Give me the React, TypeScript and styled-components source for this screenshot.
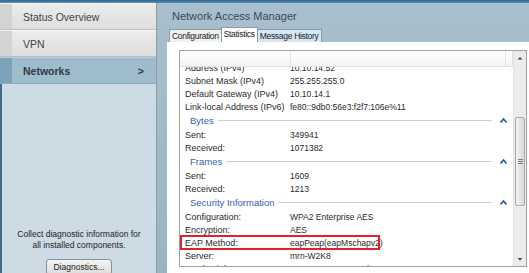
import React from 'react'
import styled, { createGlobalStyle } from 'styled-components'

const GlobalStyle = createGlobalStyle`
  html, body {
    margin: 0;
    padding: 0;
    overflow: hidden;
  }
  body {
    font-family: "Liberation Sans", Arial, sans-serif;
  }
`

const Page = styled.div`
  width: 529px;
  height: 273px;
  display: flex;
  flex-direction: column;
  overflow: hidden;
`

const TopBand = styled.div`
  height: 3px;
  background: linear-gradient(to bottom, #2f6590, #5b8fb0);
`

const Body = styled.div`
  flex: 1;
  display: flex;
  min-height: 0;
`

const Sidebar = styled.div`
  width: 156px;
  display: flex;
  flex-direction: column;
  border-right: 1px solid #8a9ba6;
`

const MenuItem = styled.div<{ $active?: boolean }>`
  height: 27px;
  display: flex;
  box-sizing: border-box;
  border-bottom: 1px solid ${(p) => (p.$active ? '#8eaabb' : '#b9bfc4')};
  border-top: 1px solid ${(p) => (p.$active ? '#b5cdd9' : '#f6f6f6')};
`

const MenuStrip = styled.div<{ $active?: boolean }>`
  width: 12px;
  background: ${(p) => (p.$active ? '#7da2b7' : '#d3d3d3')};
`

const MenuLabel = styled.div<{ $active?: boolean }>`
  flex: 1;
  display: flex;
  align-items: center;
  justify-content: space-between;
  padding: 0 12px 0 11px;
  font-size: 10.5px;
  font-weight: ${(p) => (p.$active ? 'bold' : 'normal')};
  color: ${(p) => (p.$active ? '#2f3a44' : '#444')};
  background: ${(p) =>
    p.$active ? '#9ebccb' : 'linear-gradient(to bottom, #ececec, #dedede)'};
`

const SideFill = styled.div`
  flex: 1;
  background: #cddbe5;
  border-left: 2px solid #3d6d8e;
  display: flex;
  flex-direction: column;
  align-items: center;
  justify-content: flex-end;
`

const HelpText = styled.div`
  font-size: 8.5px;
  color: #222;
  text-align: center;
  line-height: 11px;
  margin-bottom: 8px;
`

const DiagButton = styled.button`
  font-family: inherit;
  font-size: 8.5px;
  color: #222;
  width: 66px;
  height: 16px;
  padding: 0;
  margin-bottom: -2px;
  border: 1px solid #8e8f8f;
  border-radius: 3px;
  background: linear-gradient(to bottom, #f4f4f4, #dcdcdc);
`

const Main = styled.div`
  flex: 1;
  display: flex;
  flex-direction: column;
  padding-left: 10px;
  background: linear-gradient(to bottom, #a8c0cd, #9ab4c2);
  min-width: 0;
`

const Title = styled.div`
  height: 25px;
  display: flex;
  align-items: center;
  padding-left: 5px;
  font-size: 11px;
  color: #3a4a56;
`

const Tabs = styled.div`
  display: flex;
  align-items: flex-end;
  height: 14px;
  padding-left: 2px;
`

const Tab = styled.div<{ $active?: boolean; $tone?: 'blue' }>`
  font-size: 8.5px;
  letter-spacing: -0.3px;
  color: #222;
  padding: 0 2px;
  box-sizing: border-box;
  height: ${(p) => (p.$active ? '15px' : '13px')};
  line-height: ${(p) => (p.$active ? '13px' : '12px')};
  border: 1px solid #8d9aa3;
  border-bottom: none;
  margin-right: -1px;
  background: ${(p) =>
    p.$active ? '#fff' : p.$tone === 'blue' ? '#d5e6f5' : '#eef0f1'};
  position: relative;
  z-index: ${(p) => (p.$active ? 1 : 0)};
`

const Panel = styled.div`
  flex: 1;
  background: #fff;
  padding: 8px 2px 6px 12px;
  display: flex;
  min-height: 0;
`

const ListBox = styled.div`
  flex: 1;
  display: flex;
  border: 1px solid #a0a0a0;
  min-height: 0;
`

const List = styled.div`
  flex: 1;
  display: flex;
  flex-direction: column;
  min-width: 0;
`

const Header = styled.div`
  height: 15px;
  display: flex;
  background: linear-gradient(to bottom, #fff, #f3f3f3);
  border-bottom: 1px solid #e0e0e0;
`

const HeaderCell = styled.div<{ $w?: number }>`
  width: ${(p) => (p.$w ? `${p.$w}px` : 'auto')};
  flex: ${(p) => (p.$w ? 'none' : 1)};
  border-right: 1px solid #e2e2e2;
`

const Rows = styled.div`
  flex: 1;
  overflow: hidden;
`

const RowsInner = styled.div`
  margin-top: -6px;
`

const Row = styled.div<{ $highlight?: boolean }>`
  display: flex;
  height: 13px;
  align-items: center;
  font-size: 9px;
  color: #2a2a2a;
  box-sizing: border-box;
  ${(p) =>
    p.$highlight &&
    `
    width: 198px;
    margin-left: 1px;
    outline: 2px solid #e0232b;
    outline-offset: -1px;
  `}
`

const Label = styled.div<{ $highlight?: boolean }>`
  width: ${(p) => (p.$highlight ? '109px' : '110px')};
  padding-left: ${(p) => (p.$highlight ? '4px' : '5px')};
  box-sizing: border-box;
  flex: none;
`

const Value = styled.div`
  flex: 1;
  white-space: nowrap;
  font-size: 8.5px;
`

const Section = styled.div`
  height: 15px;
  display: flex;
  align-items: center;
  padding-left: 10px;
  padding-right: 6px;
  font-size: 9.5px;
  color: #3463ad;
`

const SectionLine = styled.div`
  flex: 1;
  height: 1px;
  background: #c4d0e4;
  margin: 0 8px 0 4px;
`

const Chevron = styled.svg`
  width: 7px;
  height: 5px;
`

const Scrollbar = styled.div`
  width: 12px;
  display: flex;
  flex-direction: column;
  align-items: center;
  background: #ececec;
  border-left: 1px solid #e2e2e2;
`

const ScrollArrow = styled.svg`
  width: 12px;
  height: 14px;
  flex: none;
`

const Track = styled.div`
  flex: 1;
  width: 100%;
  display: flex;
  flex-direction: column;
  padding-top: 52px;
  padding-bottom: 46px;
  box-sizing: border-box;
`

const Thumb = styled.div`
  flex: 1;
  margin: 0 1px;
  border: 1px solid #a9a9a9;
  border-radius: 2px;
  background: linear-gradient(to right, #f2f2f2, #d9d9d9);
  display: flex;
  align-items: center;
  justify-content: center;
`

const Grip = styled.div`
  width: 5px;
  height: 5px;
  background: repeating-linear-gradient(
    to bottom,
    #7d7d7d 0 1px,
    transparent 1px 2px
  );
`

const SectionHead = ({ title }: { title: string }) => (
  <Section>
    {title}
    <SectionLine />
    <Chevron viewBox="0 0 7 5">
      <path d="M0.5 4.5 L3.5 1 L6.5 4.5" fill="none" stroke="#2c56a3" strokeWidth="1.6" />
    </Chevron>
  </Section>
)

const Item = ({ label, value, highlight }: { label: string; value: string; highlight?: boolean }) => (
  <Row $highlight={highlight}>
    <Label $highlight={highlight}>{label}</Label>
    <Value>{value}</Value>
  </Row>
)

export default function App() {
  return (
    <Page>
      <GlobalStyle />
      <TopBand />
      <Body>
        <Sidebar>
          <MenuItem>
            <MenuStrip />
            <MenuLabel>Status Overview</MenuLabel>
          </MenuItem>
          <MenuItem>
            <MenuStrip />
            <MenuLabel>VPN</MenuLabel>
          </MenuItem>
          <MenuItem $active>
            <MenuStrip $active />
            <MenuLabel $active>
              <span>Networks</span>
              <span>&gt;</span>
            </MenuLabel>
          </MenuItem>
          <SideFill>
            <HelpText>
              Collect diagnostic information for
              <br />
              all installed components.
            </HelpText>
            <DiagButton>Diagnostics...</DiagButton>
          </SideFill>
        </Sidebar>
        <Main>
          <Title>Network Access Manager</Title>
          <Tabs>
            <Tab>Configuration</Tab>
            <Tab $active>Statistics</Tab>
            <Tab $tone="blue">Message History</Tab>
          </Tabs>
          <Panel>
            <ListBox>
              <List>
                <Header>
                  <HeaderCell $w={110} />
                  <HeaderCell />
                  <HeaderCell $w={6} />
                </Header>
                <Rows>
                  <RowsInner>
                    <Item label="Address (IPv4)" value="10.10.14.52" />
                    <Item label="Subnet Mask (IPv4)" value="255.255.255.0" />
                    <Item label="Default Gateway (IPv4)" value="10.10.14.1" />
                    <Item label="Link-local Address (IPv6)" value="fe80::9db0:56e3:f2f7:106e%11" />
                    <SectionHead title="Bytes" />
                    <Item label="Sent:" value="349941" />
                    <Item label="Received:" value="1071382" />
                    <SectionHead title="Frames" />
                    <Item label="Sent:" value="1609" />
                    <Item label="Received:" value="1213" />
                    <SectionHead title="Security Information" />
                    <Item label="Configuration:" value="WPA2 Enterprise AES" />
                    <Item label="Encryption:" value="AES" />
                    <Item label="EAP Method:" value="eapPeap(eapMschapv2)" highlight />
                    <Item label="Server:" value="mrn-W2K8" />
                    <Item label="Credential Type:" value="Username Password" />
                  </RowsInner>
                </Rows>
              </List>
              <Scrollbar>
                <ScrollArrow viewBox="0 0 12 14">
                  <path d="M3.5 8.5 L6 6 L8.5 8.5 Z" fill="#444" />
                </ScrollArrow>
                <Track>
                  <Thumb>
                    <Grip />
                  </Thumb>
                </Track>
                <ScrollArrow viewBox="0 0 12 14">
                  <path d="M3.5 6 L6 8.5 L8.5 6 Z" fill="#444" />
                </ScrollArrow>
              </Scrollbar>
            </ListBox>
          </Panel>
        </Main>
      </Body>
    </Page>
  )
}
